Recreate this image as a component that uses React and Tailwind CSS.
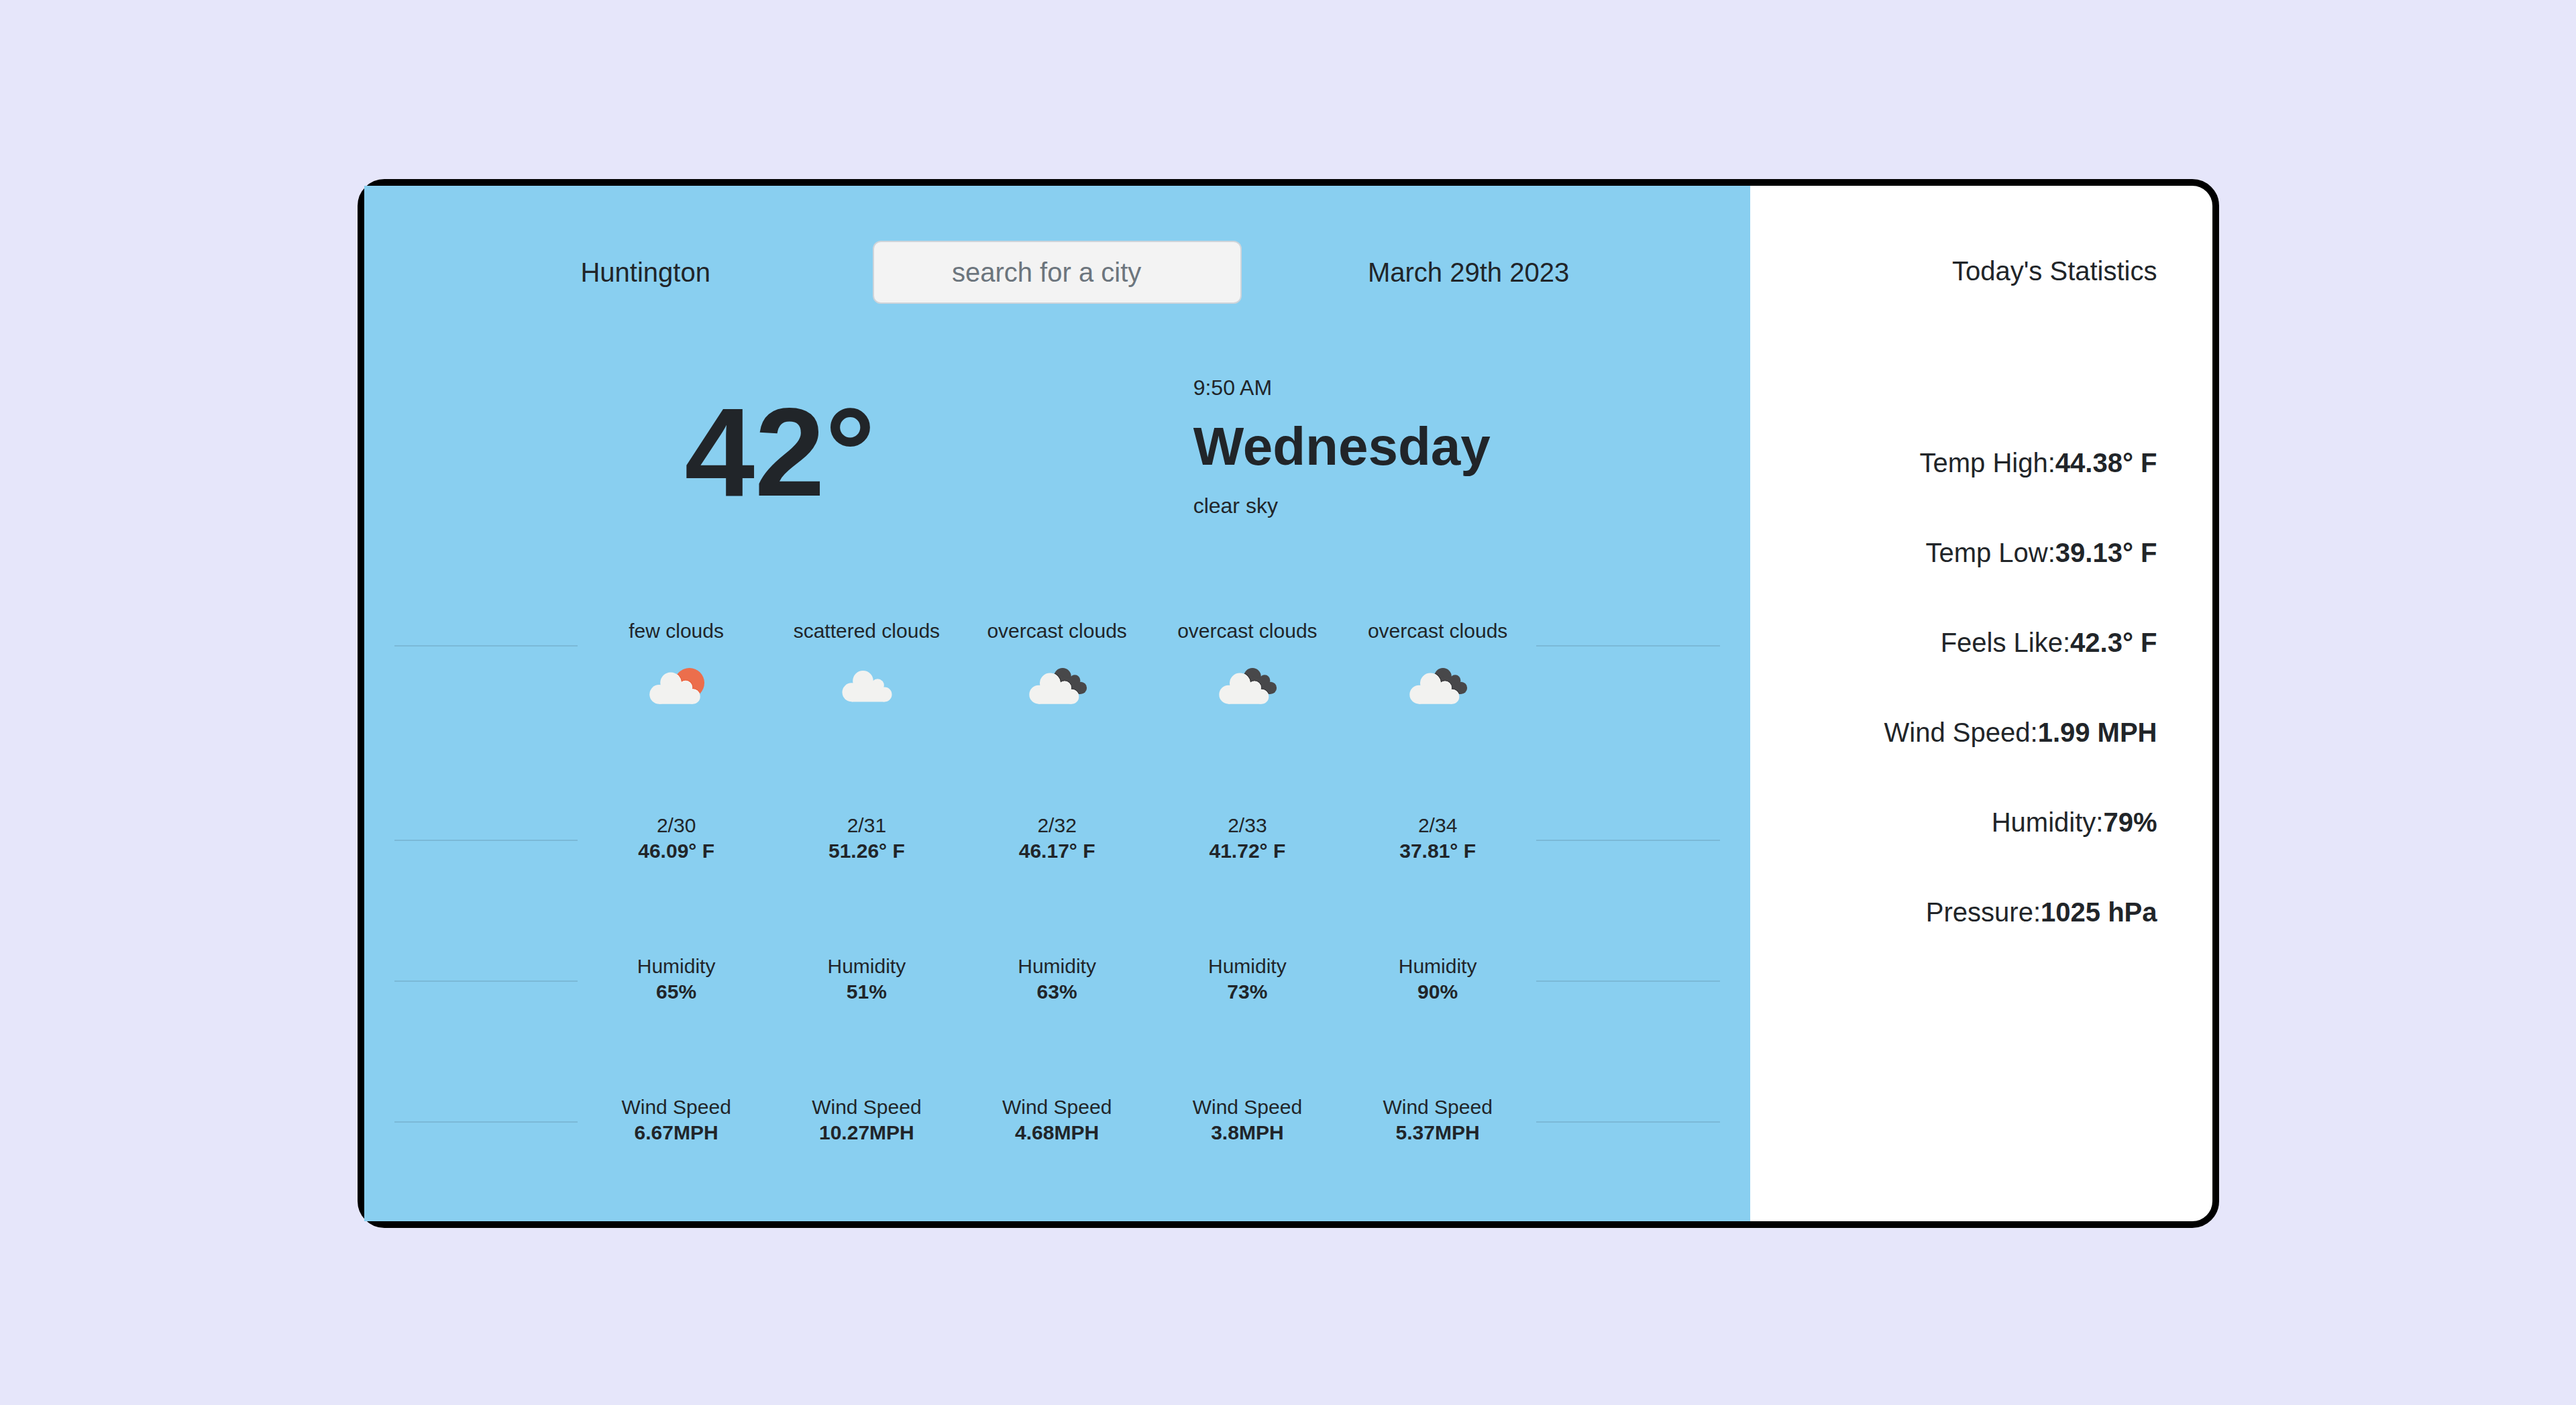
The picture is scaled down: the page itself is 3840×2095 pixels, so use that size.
const forecast = [
  { sky: "few clouds", date: "2/30", temp: "46.09° F", humidity: "65%", wind: "6.67MPH" },
  { sky: "scattered clouds", date: "2/31", temp: "51.26° F", humidity: "51%", wind: "10.27MPH" },
  { sky: "overcast clouds", date: "2/32", temp: "46.17° F", humidity: "63%", wind: "4.68MPH" },
  { sky: "overcast clouds", date: "2/33", temp: "41.72° F", humidity: "73%", wind: "3.8MPH" },
  { sky: "overcast clouds", date: "2/34", temp: "37.81° F", humidity: "90%", wind: "5.37MPH" },
];

const statistics = [
  ["Temp High:", "44.38° F"],
  ["Temp Low:", "39.13° F"],
  ["Feels Like:", "42.3° F"],
  ["Wind Speed:", "1.99 MPH"],
  ["Humidity:", "79%"],
  ["Pressure:", "1025 hPa"],
];

function CloudShape(props) {
  return (
    <g {...props}>
      <circle cx="27.5" cy="59.3" r="14" />
      <circle cx="44.5" cy="42.3" r="15.3" />
      <circle cx="66.2" cy="49" r="9.7" />
      <circle cx="76.6" cy="62.5" r="10.9" />
      <path d="M27.5 73.3V50L44.5 42L66 46L76.6 56V73.4H27.5Z" />
    </g>
  );
}

function WeatherIcon({ sky }) {
  return (
    <svg viewBox="0 0 100 100" className="mx-auto mt-[13px] mb-[5px] h-[100px] w-[100px]" role="img" aria-label={sky}>
      {sky === "few clouds" && (
        <>
          <defs>
            <clipPath id="sun">
              <circle cx="69.7" cy="45.3" r="22.3" />
            </clipPath>
          </defs>
          <circle cx="69.7" cy="45.3" r="22.3" fill="#ec6e4c" />
          <g clipPath="url(#sun)">
            <CloudShape transform="translate(-3.5 1.9) scale(1.02)" fill="#ea5a33" stroke="#ea5a33" strokeWidth="2.4" />
            <CloudShape transform="translate(-3.5 1.9) scale(1.02)" fill="#fff" stroke="#fff" strokeWidth="0.6" />
          </g>
          <CloudShape transform="translate(-3.5 1.9) scale(1.02)" fill="#f2f2f0" />
        </>
      )}
      {sky === "scattered clouds" && <CloudShape fill="#f2f2f0" />}
      {sky === "overcast clouds" && (
        <>
          <defs>
            <clipPath id="dark-cloud">
              <circle cx="58" cy="35.8" r="12.9" />
              <circle cx="76.2" cy="41.5" r="8.1" />
              <circle cx="84.9" cy="52.8" r="9.2" />
              <path d="M50 62V40L76 38L85 47V62Z" />
            </clipPath>
          </defs>
          <CloudShape transform="translate(20.6 0.3) scale(0.84)" fill="#48484a" />
          <g clipPath="url(#dark-cloud)">
            <CloudShape transform="translate(-5.2 3.4)" fill="#2c2c2e" stroke="#2c2c2e" strokeWidth="2.4" />
            <CloudShape transform="translate(-5.2 3.4)" fill="#fff" stroke="#fff" strokeWidth="0.6" />
          </g>
          <CloudShape transform="translate(-5.2 3.4)" fill="#f2f2f0" />
        </>
      )}
    </svg>
  );
}

function ForecastRow({ children }) {
  return (
    <div className="grid grid-cols-7">
      <hr className="mx-[5px] mt-10 border-t-2 border-black/10" />
      {children}
      <hr className="mx-[5px] mt-10 border-t-2 border-black/10" />
    </div>
  );
}

function Reading({ label, value }) {
  return (
    <div>
      <p>{label}</p>
      <p className="font-bold">{value}</p>
    </div>
  );
}

export default function App() {
  return (
    <div className="min-h-screen bg-[#e6e6fa] pt-[267px] pb-[263px] font-['Liberation_Sans',Arial,sans-serif] text-[#212529]">
      <main className="mx-auto flex w-full max-w-[2775px] rounded-[40px] border-10 border-black bg-white">
        <section className="w-3/4 bg-[#89cff0] pt-[82px] pb-[113px]">
          <header className="grid grid-cols-3 items-center px-[113px] text-center text-[40px] leading-[54px]">
            <h1>Huntington</h1>
            <input
              type="search"
              aria-label="search for a city"
              placeholder="search for a city"
              className="mx-auto w-[550px] rounded-xl border-2 border-[#ced4da] bg-[#f3f3f3] py-[18px] pr-[30px] pl-6 text-center placeholder:text-[#6c757d]"
            />
            <p>March 29th 2023</p>
          </header>

          <div className="mt-[105px] grid grid-cols-[478fr_758fr_830fr]">
            <p className="col-start-2 text-[188px] leading-[232px] font-bold">42°</p>
            <div className="flex flex-col gap-5 text-[32px] leading-10">
              <p>9:50 AM</p>
              <h2 className="text-[80px] leading-24 font-bold">Wednesday</h2>
              <p>clear sky</p>
            </div>
          </div>

          <div className="mt-[132px] flex flex-col gap-[134px] px-10 text-center text-[30px] leading-[38px]">
            <ForecastRow>
              {forecast.map((day) => (
                <div key={day.date}>
                  <p>{day.sky}</p>
                  <WeatherIcon sky={day.sky} />
                </div>
              ))}
            </ForecastRow>
            <ForecastRow>
              {forecast.map((day) => (
                <Reading key={day.date} label={day.date} value={day.temp} />
              ))}
            </ForecastRow>
            <ForecastRow>
              {forecast.map((day) => (
                <Reading key={day.date} label="Humidity" value={day.humidity} />
              ))}
            </ForecastRow>
            <ForecastRow>
              {forecast.map((day) => (
                <Reading key={day.date} label="Wind Speed" value={day.wind} />
              ))}
            </ForecastRow>
          </div>
        </section>

        <aside className="w-1/4 pt-[100px] pr-[82px] text-right text-[40px] leading-[54px]">
          <h2>Today's Statistics</h2>
          <ul className="mt-[232px] flex flex-col gap-20">
            {statistics.map(([label, value]) => (
              <li key={label}>
                {label}
                <strong>{value}</strong>
              </li>
            ))}
          </ul>
        </aside>
      </main>
    </div>
  );
}
